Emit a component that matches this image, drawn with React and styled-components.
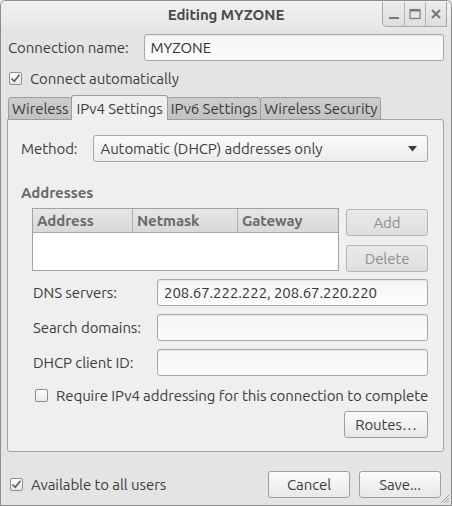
import React from "react";
import styled, { createGlobalStyle } from "styled-components";

const GlobalStyle = createGlobalStyle`
  html, body {
    margin: 0;
    padding: 0;
    background: #e4e4e4;
  }
  body {
    font-family: "Ubuntu", "Lato", "Open Sans", sans-serif;
    font-size: 15px;
    letter-spacing: -0.08px;
    color: #3c3c3c;
  }
  * { box-sizing: border-box; }
`;

const Window = styled.div`
  width: 452px;
  height: 506px;
  display: flex;
  flex-direction: column;
  background: #e4e4e4;
  border: 1px solid #8c8c8c;
  border-radius: 6px 6px 0 0;
  overflow: hidden;
  position: relative;
`;

const TitleBar = styled.div`
  height: 29px;
  display: grid;
  grid-template-columns: 1fr auto 1fr;
  align-items: start;
  background: linear-gradient(#f1f1f1, #e6e6e6);
`;

const Title = styled.div`
  grid-column: 2;
  font-weight: bold;
  color: #4a4a4a;
  padding-top: 5px;
`;

const WinButtons = styled.div`
  grid-column: 3;
  justify-self: end;
  display: flex;
  margin: 1px 4px 0 0;
  height: 25px;
  border: 1px solid #a6a6a6;
  border-top: none;
  border-radius: 0 0 0 5px;
  background: linear-gradient(#ececec, #dedede);
`;

const WinButton = styled.div`
  width: 21px;
  display: flex;
  align-items: center;
  justify-content: center;
  & + & {
    border-left: 1px solid #b4b4b4;
  }
`;

const Content = styled.div`
  flex: 1;
  display: flex;
  flex-direction: column;
  padding: 4px 7px 0 6px;
`;

const NameRow = styled.div`
  display: flex;
  align-items: center;
  gap: 15px;
  padding-left: 1px;
`;

const Entry = styled.div`
  height: 27px;
  flex: ${(p) => (p.$grow ? 1 : "none")};
  display: flex;
  align-items: center;
  padding-left: 6px;
  border: 1px solid #a9a9a9;
  border-radius: 3px;
  background: linear-gradient(#f4f4f4, #fcfcfc);
  box-shadow: inset 0 1px 1px rgba(0, 0, 0, 0.06);
  color: #333;
`;

const CheckRow = styled.label`
  display: flex;
  align-items: center;
  gap: 8px;
  height: 20px;
  white-space: nowrap;
  margin: ${(p) => p.$margin || "0"};
`;

const Box = styled.span`
  flex: none;
  width: 13px;
  height: 13px;
  border: 1px solid #8e8e8e;
  border-radius: 2px;
  background: linear-gradient(#fdfdfd, #e9e9e9);
  display: flex;
  align-items: center;
  justify-content: center;
`;

const Tabs = styled.div`
  display: flex;
  align-items: flex-end;
  margin: 7px 0 0 1px;
  height: 25px;
  position: relative;
  z-index: 1;
`;

const Tab = styled.div`
  height: ${(p) => (p.$active ? "25px" : "23px")};
  padding: 0 ${(p) => (p.$active ? "4px" : "3px")};
  display: flex;
  align-items: center;
  border: 1px solid #9c9c9c;
  border-bottom: ${(p) => (p.$active ? "none" : "1px solid #9c9c9c")};
  border-radius: 3px 3px 0 0;
  background: ${(p) => (p.$active ? "#efefef" : "linear-gradient(#cdcdcd, #c2c2c2)")};
  color: ${(p) => (p.$active ? "#3c3c3c" : "#3a3a3a")};
  margin-right: -1px;
`;

const Panel = styled.div`
  height: 333px;
  margin-top: -1px;
  border: 1px solid #a4a4a4;
  border-radius: 0 3px 3px 3px;
  background: #efefef;
  padding: 15px 15px 0 13px;
  display: flex;
  flex-direction: column;
`;

const MethodRow = styled.div`
  display: flex;
  align-items: center;
  gap: 16px;
`;

const Combo = styled.div`
  flex: 1;
  height: 27px;
  display: flex;
  align-items: center;
  justify-content: space-between;
  padding: 0 10px 0 6px;
  border: 1px solid #a6a6a6;
  border-radius: 3px;
  background: linear-gradient(#fbfbfb, #ececec);
`;

const Heading = styled.div`
  font-weight: bold;
  color: #6a6a6a;
  margin: 21px 0 0 0;
  line-height: 20px;
`;

const AddrArea = styled.div`
  display: flex;
  gap: 7px;
  margin: 5px 0 0 11px;
`;

const Table = styled.div`
  width: 308px;
  height: 63px;
  border: 1px solid #a2a2a2;
  background: #fff;
`;

const HeadRow = styled.div`
  display: grid;
  grid-template-columns: 99px 105px 1fr;
  height: 24px;
  background: linear-gradient(#e6e6e6, #d8d8d8);
  border-bottom: 1px solid #a8a8a8;
`;

const HeadCell = styled.div`
  display: flex;
  align-items: center;
  padding-left: 4px;
  font-weight: bold;
  color: #6a6a6a;
  & + & {
    border-left: 1px solid #b2b2b2;
  }
`;

const SideButtons = styled.div`
  display: flex;
  flex-direction: column;
  gap: 9px;
  padding-top: 1px;
`;

const Button = styled.div`
  width: ${(p) => p.$width || 82}px;
  height: 27px;
  display: flex;
  align-items: center;
  justify-content: center;
  border: 1px solid ${(p) => (p.$disabled ? "#b4b4b4" : "#9e9e9e")};
  border-radius: 3px;
  background: ${(p) =>
    p.$disabled ? "linear-gradient(#e9e9e9, #dfdfdf)" : "linear-gradient(#fbfbfb, #e8e8e8)"};
  color: ${(p) => (p.$disabled ? "#8f8f8f" : "#3c3c3c")};
`;

const Form = styled.div`
  display: grid;
  grid-template-columns: 124px 1fr;
  row-gap: 8px;
  margin: 7px 0 0 12px;
  align-items: center;
`;

const FieldLabel = styled.div`
  line-height: 27px;
`;

const RoutesRow = styled.div`
  display: flex;
  justify-content: flex-end;
  margin-top: 6px;
`;

const Footer = styled.div`
  display: flex;
  align-items: center;
  justify-content: space-between;
  margin: 19px 3px 0 3px;
`;

const FooterButtons = styled.div`
  display: flex;
  gap: 9px;
`;

const Grip = styled.svg`
  position: absolute;
  right: 1px;
  bottom: 1px;
`;

const Check = () => (
  <svg width="11" height="11" viewBox="0 0 11 11">
    <path d="M1.5 5.5 L4.2 8.3 L9.5 1.8" fill="none" stroke="#5a5a5a" strokeWidth="1.5" />
  </svg>
);

const CheckBox = ({ checked }) => <Box>{checked && <Check />}</Box>;

export default function App() {
  return (
    <>
      <GlobalStyle />
      <Window>
        <TitleBar>
          <Title>Editing MYZONE</Title>
          <WinButtons>
            <WinButton>
              <svg width="12" height="12" viewBox="0 0 12 12">
                <rect x="1" y="9" width="10" height="2" fill="#7a7a7a" />
              </svg>
            </WinButton>
            <WinButton>
              <svg width="12" height="12" viewBox="0 0 12 12">
                <rect x="1" y="1.5" width="10" height="9" fill="none" stroke="#7a7a7a" strokeWidth="1.2" />
                <rect x="1" y="1" width="10" height="2.5" fill="#7a7a7a" />
              </svg>
            </WinButton>
            <WinButton>
              <svg width="12" height="12" viewBox="0 0 12 12">
                <path d="M2 2 L10 10 M10 2 L2 10" stroke="#7a7a7a" strokeWidth="2.2" />
              </svg>
            </WinButton>
          </WinButtons>
        </TitleBar>
        <Content>
          <NameRow>
            <span>Connection name:</span>
            <Entry $grow>MYZONE</Entry>
          </NameRow>
          <CheckRow $margin="7px 0 0 2px">
            <CheckBox checked />
            <span>Connect automatically</span>
          </CheckRow>
          <Tabs>
            <Tab>Wireless</Tab>
            <Tab $active>IPv4 Settings</Tab>
            <Tab>IPv6 Settings</Tab>
            <Tab>Wireless Security</Tab>
          </Tabs>
          <Panel>
            <MethodRow>
              <span>Method:</span>
              <Combo>
                <span>Automatic (DHCP) addresses only</span>
                <svg width="9" height="6" viewBox="0 0 9 6">
                  <path d="M0 0 H9 L4.5 5.5 Z" fill="#3c3c3c" />
                </svg>
              </Combo>
            </MethodRow>
            <Heading>Addresses</Heading>
            <AddrArea>
              <Table>
                <HeadRow>
                  <HeadCell>Address</HeadCell>
                  <HeadCell>Netmask</HeadCell>
                  <HeadCell>Gateway</HeadCell>
                </HeadRow>
              </Table>
              <SideButtons>
                <Button $disabled>Add</Button>
                <Button $disabled>Delete</Button>
              </SideButtons>
            </AddrArea>
            <Form>
              <FieldLabel>DNS servers:</FieldLabel>
              <Entry>208.67.222.222, 208.67.220.220</Entry>
              <FieldLabel>Search domains:</FieldLabel>
              <Entry />
              <FieldLabel>DHCP client ID:</FieldLabel>
              <Entry />
            </Form>
            <CheckRow $margin="9px 0 0 14px">
              <CheckBox />
              <span>Require IPv4 addressing for this connection to complete</span>
            </CheckRow>
            <RoutesRow>
              <Button $width={84}>Routes…</Button>
            </RoutesRow>
          </Panel>
          <Footer>
            <CheckRow>
              <CheckBox checked />
              <span>Available to all users</span>
            </CheckRow>
            <FooterButtons>
              <Button>Cancel</Button>
              <Button>Save...</Button>
            </FooterButtons>
          </Footer>
        </Content>
        <Grip width="12" height="12" viewBox="0 0 12 12">
          <path d="M11 3 L3 11 M11 6 L6 11 M11 9 L9 11" stroke="#a0a0a0" strokeWidth="1" />
        </Grip>
      </Window>
    </>
  );
}
